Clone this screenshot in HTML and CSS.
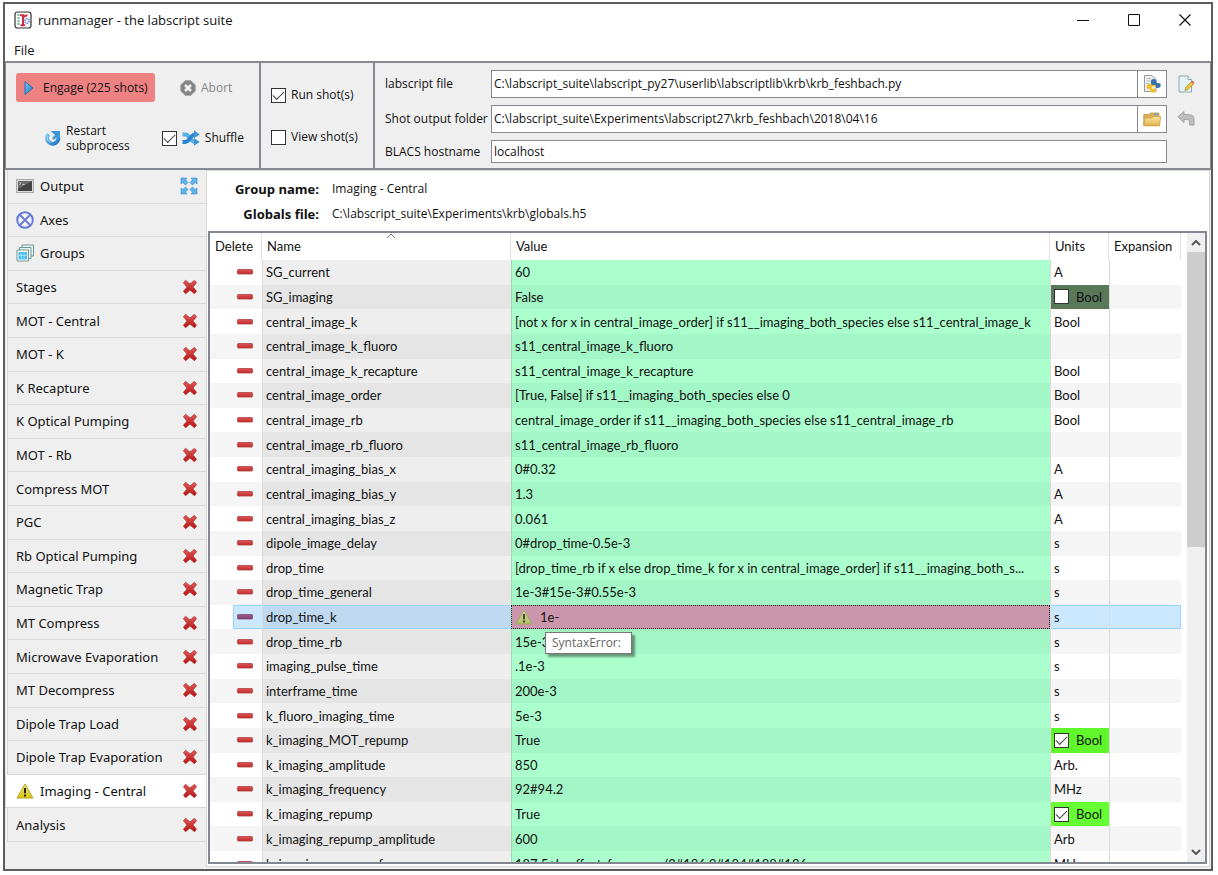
FILE: index.html
```html
<!DOCTYPE html>
<html lang="en">
<head>
<meta charset="utf-8">
<title>runmanager - the labscript suite</title>
<link rel="stylesheet" href="styles.css">
</head>
<body>
<svg class="sprite" aria-hidden="true">
  <defs>
    <linearGradient id="red" x1="0" y1="0" x2="0" y2="1"><stop offset="0" stop-color="#e05a5a"/><stop offset="1" stop-color="#b51212"/></linearGradient>
    <linearGradient id="bar" x1="0" y1="0" x2="0" y2="1"><stop offset="0" stop-color="#dc5555"/><stop offset="1" stop-color="#c02c2c"/></linearGradient>
    <linearGradient id="blue" x1="0" y1="0" x2="1" y2="1"><stop offset="0" stop-color="#7cc6f0"/><stop offset="1" stop-color="#1d78c4"/></linearGradient>
    <linearGradient id="yellow" x1="0" y1="0" x2="0" y2="1"><stop offset="0" stop-color="#f3ea7a"/><stop offset="1" stop-color="#d8c40c"/></linearGradient>
    <linearGradient id="folder-front" x1="0" y1="0" x2="0" y2="1"><stop offset="0" stop-color="#fbe3a0"/><stop offset="1" stop-color="#e3b352"/></linearGradient>
  </defs>
  <symbol id="i-cross" viewBox="0 0 16 16"><path d="M3.600 1.200 8 5l4.400-3.800 2.200 2.600L11 8l3.600 4.200-2.200 2.600L8 11l-4.400 3.800-2.200-2.600L5 8 1.400 3.800z" fill="url(#red)" stroke="#a82020" stroke-width=".6" stroke-linejoin="round"/></symbol>
  <symbol id="i-warn" viewBox="0 0 18 16"><path d="M9 1 17 15H1z" fill="url(#yellow)" stroke="#b5a52c" stroke-linejoin="round"/><path d="M9 5v5.200M9 11.600v1.900" stroke="#222" stroke-width="2"/></symbol>
  <symbol id="i-minus" viewBox="0 0 16 6"><rect x=".5" y=".5" width="15" height="4.500" rx=".8" fill="url(#bar)" stroke="#b04040" stroke-width=".8"/></symbol>
</svg>

<div class="window">
  <header class="titlebar">
    <svg class="icon18" viewBox="0 0 18 18"><rect x="1" y="1" width="16" height="16" rx="2.500" fill="#fff" stroke="#333" stroke-width="1.200"/><path d="M3.500 4h2M3.500 7h2M3.500 10h2M3.500 13h2" stroke="#3aa76a" stroke-width="1.400"/><path d="M6 4.300H9V14M6.500 14.200H11M9 7c1-2 2.500-2.800 4.500-2.500" fill="none" stroke="#d12a44" stroke-width="2"/><circle cx="13" cy="10" r="2.300" fill="#e8ecff" stroke="#6a7fd0" stroke-dasharray="1.500 .7" stroke-width="1.300"/></svg>
    <h1 class="title">runmanager - the labscript suite</h1>
    <div class="controls">
      <button class="plain" aria-label="Minimize"><svg class="icon12" viewBox="0 0 12 12"><path d="M0 6.500h12" stroke="#111"/></svg></button>
      <button class="plain" aria-label="Maximize"><svg class="icon12" viewBox="0 0 12 12"><path d="M.5.5h11v11H.5z" fill="none" stroke="#111"/></svg></button>
      <button class="plain" aria-label="Close"><svg class="icon12" viewBox="0 0 12 12"><path d="m.5.5 11 11m0-11-11 11" stroke="#111" stroke-width="1.200"/></svg></button>
    </div>
  </header>
  <nav class="menubar"><button class="plain">File</button></nav>

  <section class="toolbar">
    <div class="actions">
      <div class="action-row">
        <button class="plain engage"><svg class="icon16" viewBox="0 0 16 16"><path d="M4 1.500 12 8 4 14.500z" fill="url(#blue)" stroke="#2a6fae" stroke-linejoin="round"/></svg>Engage (225 shots)</button>
        <button class="plain abort" disabled><svg class="icon16" viewBox="0 0 16 16"><path d="M5 .8h6L15.200 5v6L11 15.200H5L.8 11V5z" fill="#858585" stroke="#999"/><path d="m5 5 6 6m0-6-6 6" stroke="#f2f2f2" stroke-width="2.600"/></svg>Abort</button>
      </div>
      <div class="action-row second">
        <button class="plain restart"><svg class="icon16" viewBox="0 0 16 16"><path d="M3.800 4.200A5.600 5.600 0 1 0 13 6.200" fill="none" stroke="url(#blue)" stroke-width="4"/><path d="M5.500 1H15v8.500z" fill="#3d96d6"/><path d="M2.500 6.500A5.500 5.500 0 0 0 5 12.500" fill="none" stroke="#a6d8f5"/><path d="M12 5 8 9" stroke="#3d96d6" stroke-width="2.500"/></svg><span>Restart<br>subprocess</span></button>
        <label class="check shuffle"><input type="checkbox" checked><svg class="icon18" viewBox="0 0 18 16"><path d="M.5 4.500h3C7.500 4.500 8.500 12 13 12" fill="none" stroke="#57aee4" stroke-width="3.800"/><path d="M.5 12h3C7.500 12 8.500 4.500 13 4.500" fill="none" stroke="#2b86cf" stroke-width="3.800"/><path d="m12 .3 5.700 4.200L12 8.200zM12 8.100l5.700 3.900-5.700 3.800z" fill="#3d96d6"/></svg>Shuffle</label>
      </div>
    </div>
    <div class="options">
      <label class="check"><input type="checkbox" checked>Run shot(s)</label>
      <label class="check"><input type="checkbox">View shot(s)</label>
    </div>
    <form class="paths">
      <label for="script">labscript file</label>
      <div class="field"><input id="script" type="text" value="C:\labscript_suite\labscript_py27\userlib\labscriptlib\krb\krb_feshbach.py"><button type="button" class="plain browse" aria-label="Choose labscript file"><svg class="icon18" viewBox="0 0 18 18"><path d="M1.500.5H9l4 4v12H1.500z" fill="#eee" stroke="#999"/><path d="M3.500 3.500H8M3.500 6H8M3.500 8.500H6" stroke="#bbb"/><path d="M8 8.500V6q0-2 2.700-2t2.800 2v2H15q2.800 0 2.800 2.300T15.500 13H13V10.500H8z" fill="#3672a8"/><path d="M8.500 9H5.700Q3.500 9 3.500 11.500T5.700 14H7v1.500q0 2.200 2.700 2.200T12.500 15.500V13.800H8.800V11.500H12.500V10H8.500z" fill="#f2c02a"/></svg></button></div>
      <button type="button" class="plain" aria-label="Edit labscript file"><svg class="icon18" viewBox="0 0 18 18"><path d="M2 1h9l3.500 3.500V17H2z" fill="#e4f3f6" stroke="#8fa9ae"/><path d="M11 1v3.500h3.500" fill="#fff" stroke="#8fa9ae"/><path d="m8 15.500.8-3 5.500-5.700 2.200 2.200-5.500 5.500z" fill="#f4c630" stroke="#94741d" stroke-width=".6"/><path d="m14.300 6.800 1.200-1.200 2.200 2.200-1.200 1.200z" fill="#e36464"/></svg></button>
      <label for="folder">Shot output folder</label>
      <div class="field"><input id="folder" type="text" value="C:\labscript_suite\Experiments\labscript27\krb_feshbach\2018\04\16"><button type="button" class="plain browse" aria-label="Choose output folder"><svg class="icon18" viewBox="0 0 18 18"><path d="M.8 15.500V4.500h5L7.500 3H16v12.500z" fill="#dcae55" stroke="#c0964a" stroke-width=".8"/><path d="M11 4.300h4" stroke="#58a8d8" stroke-width="1.500"/><path d="M.8 15.800 1.800 8H9l1.500-1.500h7.200L16.500 15.800z" fill="url(#folder-front)" stroke="#c79a43" stroke-width=".7"/></svg></button></div>
      <button type="button" class="plain" disabled aria-label="Reset output folder"><svg class="icon18" viewBox="0 0 18 18"><path d="M.8 6.800 7 1.500v3h4.500q5.500 0 5.500 5V15h-4.500v-3q0-2.500-2-2.500H7v3z" fill="#bdbdbd" stroke="#9a9a9a" stroke-width=".8"/></svg></button>
      <label for="host">BLACS hostname</label>
      <div class="field host"><input id="host" type="text" value="localhost"></div>
    </form>
  </section>

  <main class="main">
    <nav class="tabs">
      <div class="tab"><button class="plain name"><svg class="icon18" viewBox="0 0 18 16"><rect x=".5" y="1.500" width="17" height="13" fill="#ddd" stroke="#a9a9a9"/><path d="M2 3h14v10H2z" fill="#444"/><path d="M2 3h14L2 11z" fill="#6b6b6b"/><path d="m3.500 4.500 1.500 1-1.500 1m3 0h2" fill="none" stroke="#eee" stroke-width=".8"/></svg>Output</button><button class="plain end" aria-label="Pop out"><svg class="icon18" viewBox="0 0 18 18"><path d="M1 1h6L5.500 2.800 8 5.500 5.500 8 2.800 5.500 1 7zM17 1v6l-1.800-1.500L12.500 8 10 5.500l2.500-2.700L11 1zM1 17v-6l1.800 1.500L5.500 10 8 12.500l-2.500 2.700L7 17zM17 17h-6l1.500-1.800L10 12.500l2.500-2.500 2.700 2.500L17 11z" fill="#5fb4ea" stroke="#3488c6" stroke-width=".6"/></svg></button></div>
      <div class="tab"><button class="plain name"><svg class="icon18" viewBox="0 0 18 18"><circle cx="9" cy="9" r="7.800" fill="#f4f5ff" stroke="#6678d8" stroke-width="2"/><path d="m3.500 3.500 11 11m0-11-11 11" stroke="#6678d8" stroke-width="1.800"/></svg>Axes</button></div>
      <div class="tab"><button class="plain name"><svg class="icon18" viewBox="0 0 18 18"><path d="M6 1h11.500v11H6z" fill="#e8f3f3" stroke="#6f9696"/><path d="M3.500 3.500H15v11H3.500z" fill="#e8f3f3" stroke="#6f9696"/><path d="M1 6h11.500v11H1z" fill="#fff" stroke="#6f9696"/><path d="M2.500 8H11v7.500H2.500z" fill="#45bdf0"/><path d="M5.300 9v6.500M8.200 9v6.500M2.500 11.500H11" stroke="#b5e5fa" stroke-width=".7"/></svg>Groups</button></div>
      <div class="tab"><button class="plain name">Stages</button><button class="plain end" aria-label="Close Stages"><svg class="icon16"><use href="#i-cross"/></svg></button></div>
      <div class="tab"><button class="plain name">MOT - Central</button><button class="plain end" aria-label="Close MOT - Central"><svg class="icon16"><use href="#i-cross"/></svg></button></div>
      <div class="tab"><button class="plain name">MOT - K</button><button class="plain end" aria-label="Close MOT - K"><svg class="icon16"><use href="#i-cross"/></svg></button></div>
      <div class="tab"><button class="plain name">K Recapture</button><button class="plain end" aria-label="Close K Recapture"><svg class="icon16"><use href="#i-cross"/></svg></button></div>
      <div class="tab"><button class="plain name">K Optical Pumping</button><button class="plain end" aria-label="Close K Optical Pumping"><svg class="icon16"><use href="#i-cross"/></svg></button></div>
      <div class="tab"><button class="plain name">MOT - Rb</button><button class="plain end" aria-label="Close MOT - Rb"><svg class="icon16"><use href="#i-cross"/></svg></button></div>
      <div class="tab"><button class="plain name">Compress MOT</button><button class="plain end" aria-label="Close Compress MOT"><svg class="icon16"><use href="#i-cross"/></svg></button></div>
      <div class="tab"><button class="plain name">PGC</button><button class="plain end" aria-label="Close PGC"><svg class="icon16"><use href="#i-cross"/></svg></button></div>
      <div class="tab"><button class="plain name">Rb Optical Pumping</button><button class="plain end" aria-label="Close Rb Optical Pumping"><svg class="icon16"><use href="#i-cross"/></svg></button></div>
      <div class="tab"><button class="plain name">Magnetic Trap</button><button class="plain end" aria-label="Close Magnetic Trap"><svg class="icon16"><use href="#i-cross"/></svg></button></div>
      <div class="tab"><button class="plain name">MT Compress</button><button class="plain end" aria-label="Close MT Compress"><svg class="icon16"><use href="#i-cross"/></svg></button></div>
      <div class="tab"><button class="plain name">Microwave Evaporation</button><button class="plain end" aria-label="Close Microwave Evaporation"><svg class="icon16"><use href="#i-cross"/></svg></button></div>
      <div class="tab"><button class="plain name">MT Decompress</button><button class="plain end" aria-label="Close MT Decompress"><svg class="icon16"><use href="#i-cross"/></svg></button></div>
      <div class="tab"><button class="plain name">Dipole Trap Load</button><button class="plain end" aria-label="Close Dipole Trap Load"><svg class="icon16"><use href="#i-cross"/></svg></button></div>
      <div class="tab"><button class="plain name">Dipole Trap Evaporation</button><button class="plain end" aria-label="Close Dipole Trap Evaporation"><svg class="icon16"><use href="#i-cross"/></svg></button></div>
      <div class="tab current"><button class="plain name"><svg class="icon18"><use href="#i-warn"/></svg>Imaging - Central</button><button class="plain end" aria-label="Close Imaging - Central"><svg class="icon16"><use href="#i-cross"/></svg></button></div>
      <div class="tab"><button class="plain name">Analysis</button><button class="plain end" aria-label="Close Analysis"><svg class="icon16"><use href="#i-cross"/></svg></button></div>
    </nav>

    <section class="page">
      <dl class="info">
        <dt>Group name:</dt><dd>Imaging - Central</dd>
        <dt>Globals file:</dt><dd>C:\labscript_suite\Experiments\krb\globals.h5</dd>
      </dl>
      <div class="frame">
        <div class="scroller">
          <table class="globals">
            <colgroup><col class="c-delete"><col class="c-name"><col><col class="c-units"><col class="c-expansion"></colgroup>
            <thead><tr><th>Delete</th><th>Name<svg class="sort" viewBox="0 0 10 6"><path d="m1 5 4-4 4 4" fill="none" stroke="#777"/></svg></th><th>Value</th><th>Units</th><th>Expansion</th></tr></thead>
            <tbody id="rows"></tbody>
          </table>
        </div>
        <div class="scrollbar">
          <svg class="arrow" viewBox="0 0 10 6"><path d="m1 5 4-4 4 4" fill="none" stroke="#555" stroke-width="2"/></svg>
          <div class="thumb"></div>
          <svg class="arrow" viewBox="0 0 10 6"><path d="m1 1 4 4 4-4" fill="none" stroke="#555" stroke-width="2"/></svg>
        </div>
      </div>
    </section>
  </main>
</div>
<script src="rows.js"></script>
</body>
</html>
```

FILE: styles.css
```css
* { box-sizing: border-box; }

body {
  margin: 0;
  height: 100vh;
  padding: 2px 5px 4px 3px;
  background: #fff;
  color: #111;
  font: 12px/16px "Open Sans", "Noto Sans", sans-serif;
}

.sprite { position: absolute; width: 0; height: 0; }
svg { flex: none; display: block; }
.icon12 { width: 12px; height: 12px; }
.icon16 { width: 16px; height: 16px; }
.icon18 { width: 18px; height: 18px; }

.plain {
  margin: 0;
  padding: 0;
  border: 0;
  background: none;
  color: inherit;
  font: inherit;
  text-align: left;
}

input[type="checkbox"] {
  appearance: none;
  flex: none;
  width: 15px;
  height: 15px;
  margin: 0;
  border: 1px solid #333;
  background: #fff;
}
input[type="checkbox"]:checked {
  display: grid;
  place-items: center;
}
input[type="checkbox"]:checked::after {
  content: "";
  width: 10px;
  height: 5px;
  margin-bottom: 3px;
  border: solid #444;
  border-width: 0 0 1px 1px;
  transform: rotate(-45deg);
}

.window {
  display: flex;
  flex-direction: column;
  height: 100%;
  border: 2px solid #5d5d5f;
  background: #efefef;
}

.titlebar {
  display: flex;
  align-items: center;
  gap: 6px;
  height: 32px;
  padding: 0 20px 0 9px;
  background: #fff;
}
.title { flex: 1; margin: 0; font-size: 13px; font-weight: 400; }
.controls { display: flex; gap: 39px; }

.menubar { height: 25px; padding: 6px 9px; background: #fff; font-size: 13px; }

.toolbar {
  display: flex;
  height: 109px;
  border: solid #868990;
  border-width: 2px 1px;
}
.toolbar > * + * { border-left: 2px solid #868990; }
.actions { width: 253px; padding: 10px; }
.action-row { display: flex; align-items: center; gap: 25px; }
.engage {
  display: flex;
  align-items: center;
  gap: 6px;
  width: 139px;
  height: 29px;
  padding: 0 5px;
  border-radius: 3px;
  background: #ee8181;
  white-space: nowrap;
}
.abort { display: flex; align-items: center; gap: 5px; color: #858585; }
.second { padding: 21px 0 0 29px; gap: 32px; }
.restart { display: flex; align-items: center; gap: 5px; line-height: 15px; }
.check { display: flex; align-items: center; gap: 5px; white-space: nowrap; }

.options { display: flex; flex-direction: column; gap: 26px; width: 114px; padding: 24px 10px; }

.paths {
  flex: 1;
  display: grid;
  grid-template-columns: 98px 1fr 20px;
  align-content: start;
  align-items: center;
  gap: 7px 8px;
  padding: 7px 15px 7px 10px;
}
.paths > label { white-space: nowrap; }
.paths > button { justify-self: end; }
.field { display: flex; height: 28px; border: 1px solid #868990; background: #fff; }
.field input { flex: 1; min-width: 0; padding: 0 2px; border: 0; background: none; color: inherit; font: inherit; }
.browse { display: grid; place-items: center; width: 29px; border-left: 1px solid #868990; }
.host { height: 23px; }

.main { flex: 1; display: flex; min-height: 0; }
.tabs {
  display: grid;
  grid-auto-rows: 1fr;
  width: 201px;
  padding-bottom: 27px;
  font-family: "Noto Sans", sans-serif;
}
.tab {
  display: flex;
  align-items: center;
  justify-content: space-between;
  margin-left: 2px;
  padding: 0 8px;
  border: solid #d9d9d9;
  border-width: 0 0 1px 1px;
  font-size: 13px;
}
.tab.current { margin-left: 0; padding-left: 10px; background: #fff; }
.name { display: flex; align-items: center; gap: 6px; white-space: nowrap; }

.page {
  flex: 1;
  display: flex;
  flex-direction: column;
  min-width: 0;
  margin: 0 1px 2px 0;
  padding: 0 2px 2px 1px;
  border: 1px solid #d9d9d9;
  background: #fff;
}
.info {
  display: grid;
  grid-template-columns: 111px 1fr;
  gap: 9px 13px;
  margin: 0;
  padding: 10px 0 9px;
}
.info dt { font-size: 13px; font-weight: 700; text-align: right; }
.info dd { margin: 0; }

.frame { flex: 1; display: flex; min-height: 0; border: 2px solid #828790; }
.scroller { flex: 1; min-width: 0; padding-right: 6px; overflow: hidden; }

.globals {
  width: 100%;
  height: 643px;
  table-layout: fixed;
  border-collapse: separate;
  border-spacing: 0;
  font: 13px/16px Lato, "Open Sans", sans-serif;
}
.c-delete { width: 52px; }
.c-name { width: 249px; }
.c-units { width: 59px; }
.c-expansion { width: 72px; }
th {
  position: relative;
  height: 27px;
  padding: 0 4px 2px 5px;
  border-right: 1px solid #e0e0e0;
  font-weight: 400;
  text-align: left;
  white-space: nowrap;
}
.sort { position: absolute; top: 0; left: 50%; width: 10px; height: 6px; }
td { padding: 0 3px; border-left: 1px solid #dadada; white-space: nowrap; overflow: hidden; text-overflow: ellipsis; }
td:first-child { padding-left: 27px; border-left: 0; }
td:nth-child(2) { background: #eeeeee; }
td:nth-child(3) { background: #aaffcc; border-left-color: #98dcb4; }
tr:nth-child(even) td { background: #f5f5f5; }
tr:nth-child(even) td:nth-child(2) { background: #e5e5e5; }
tr:nth-child(even) td:nth-child(3) { background: #a3f6c5; }
td .plain { display: block; }
.minus { width: 16px; height: 6px; }

tbody tr td.bool { background: #66ff33; }
tbody tr:nth-child(even) td.bool { background: #5ff62c; }
tbody tr:nth-child(even) td.bool.off { background: #587858; }
.bool label { display: flex; align-items: center; gap: 7px; }

tr.selected td { background: #cce8ff; box-shadow: inset 0 1px #99d1ff, inset 0 -1px #99d1ff; }
tr.selected td:first-child {
  padding-left: 4px;
  border-left: 23px solid #fff;
  box-shadow: inset 0 1px #99d1ff, inset 0 -1px #99d1ff, inset 1px 0 #99d1ff;
}
tr.selected td:last-child { box-shadow: inset 0 1px #99d1ff, inset 0 -1px #99d1ff, inset -1px 0 #99d1ff; }
tr.selected td:nth-child(2) { background: #bfd9f0; }
tr.selected td:nth-child(3) {
  position: relative;
  overflow: visible;
  background: #cc96ad;
  box-shadow: none;
  outline: 1px dotted #222;
  outline-offset: -1px;
}
.selected .minus { filter: hue-rotate(-50deg) saturate(.5); }
.error { display: flex; align-items: center; gap: 7px; }
.error svg { width: 18px; height: 16px; opacity: .75; filter: hue-rotate(20deg) saturate(.7); }
.tooltip {
  position: absolute;
  top: 27px;
  left: 33px;
  z-index: 1;
  padding: 2px 10px 2px 6px;
  border: 1px solid #777;
  background: #fff;
  box-shadow: 3px 3px 2px #0006;
  color: #666;
  font: 12px/16px "Open Sans", sans-serif;
}

.scrollbar { display: flex; flex-direction: column; align-items: center; width: 18px; padding: 7px 0; background: #f0f0f0; }
.arrow { width: 10px; height: 6px; }
.thumb { width: 100%; height: 295px; margin: 6px 0 auto; background: #cdcdcd; }
```

FILE: rows.js
```js
const globals = [
  ["SG_current", "60", "A"],
  ["SG_imaging", "False", false],
  ["central_image_k", "[not x for x in central_image_order] if s11__imaging_both_species else s11_central_image_k", "Bool"],
  ["central_image_k_fluoro", "s11_central_image_k_fluoro", ""],
  ["central_image_k_recapture", "s11_central_image_k_recapture", "Bool"],
  ["central_image_order", "[True, False] if s11__imaging_both_species else 0", "Bool"],
  ["central_image_rb", "central_image_order if s11__imaging_both_species else s11_central_image_rb", "Bool"],
  ["central_image_rb_fluoro", "s11_central_image_rb_fluoro", ""],
  ["central_imaging_bias_x", "0#0.32", "A"],
  ["central_imaging_bias_y", "1.3", "A"],
  ["central_imaging_bias_z", "0.061", "A"],
  ["dipole_image_delay", "0#drop_time-0.5e-3", "s"],
  ["drop_time", "[drop_time_rb if x else drop_time_k for x in central_image_order] if s11__imaging_both_s...", "s"],
  ["drop_time_general", "1e-3#15e-3#0.55e-3", "s"],
  ["drop_time_k", "1e-", "s", "SyntaxError:"],
  ["drop_time_rb", "15e-3", "s"],
  ["imaging_pulse_time", ".1e-3", "s"],
  ["interframe_time", "200e-3", "s"],
  ["k_fluoro_imaging_time", "5e-3", "s"],
  ["k_imaging_MOT_repump", "True", true],
  ["k_imaging_amplitude", "850", "Arb."],
  ["k_imaging_frequency", "92#94.2", "MHz"],
  ["k_imaging_repump", "True", true],
  ["k_imaging_repump_amplitude", "600", "Arb"],
  ["k_imaging_repump_freq", "187.5+k_offset_frequency(2#186.9#184#188#186", "MHz"],
];

const body = document.getElementById("rows");
for (const [name, value, units, error] of globals) {
  const row = body.insertRow();
  row.insertCell().innerHTML = `<button class="plain" aria-label="Delete ${name}"><svg class="minus"><use href="#i-minus"/></svg></button>`;
  row.insertCell().textContent = name;
  const valueCell = row.insertCell();
  if (error) {
    row.className = "selected";
    valueCell.innerHTML = `<div class="error"><svg><use href="#i-warn"/></svg>${value}</div><div class="tooltip" role="tooltip">${error}</div>`;
  } else {
    valueCell.textContent = value;
  }
  const unitCell = row.insertCell();
  if (typeof units === "boolean") {
    unitCell.className = units ? "bool" : "bool off";
    unitCell.innerHTML = `<label><input type="checkbox"${units ? " checked" : ""}>Bool</label>`;
  } else {
    unitCell.textContent = units;
  }
  row.insertCell();
}
```
